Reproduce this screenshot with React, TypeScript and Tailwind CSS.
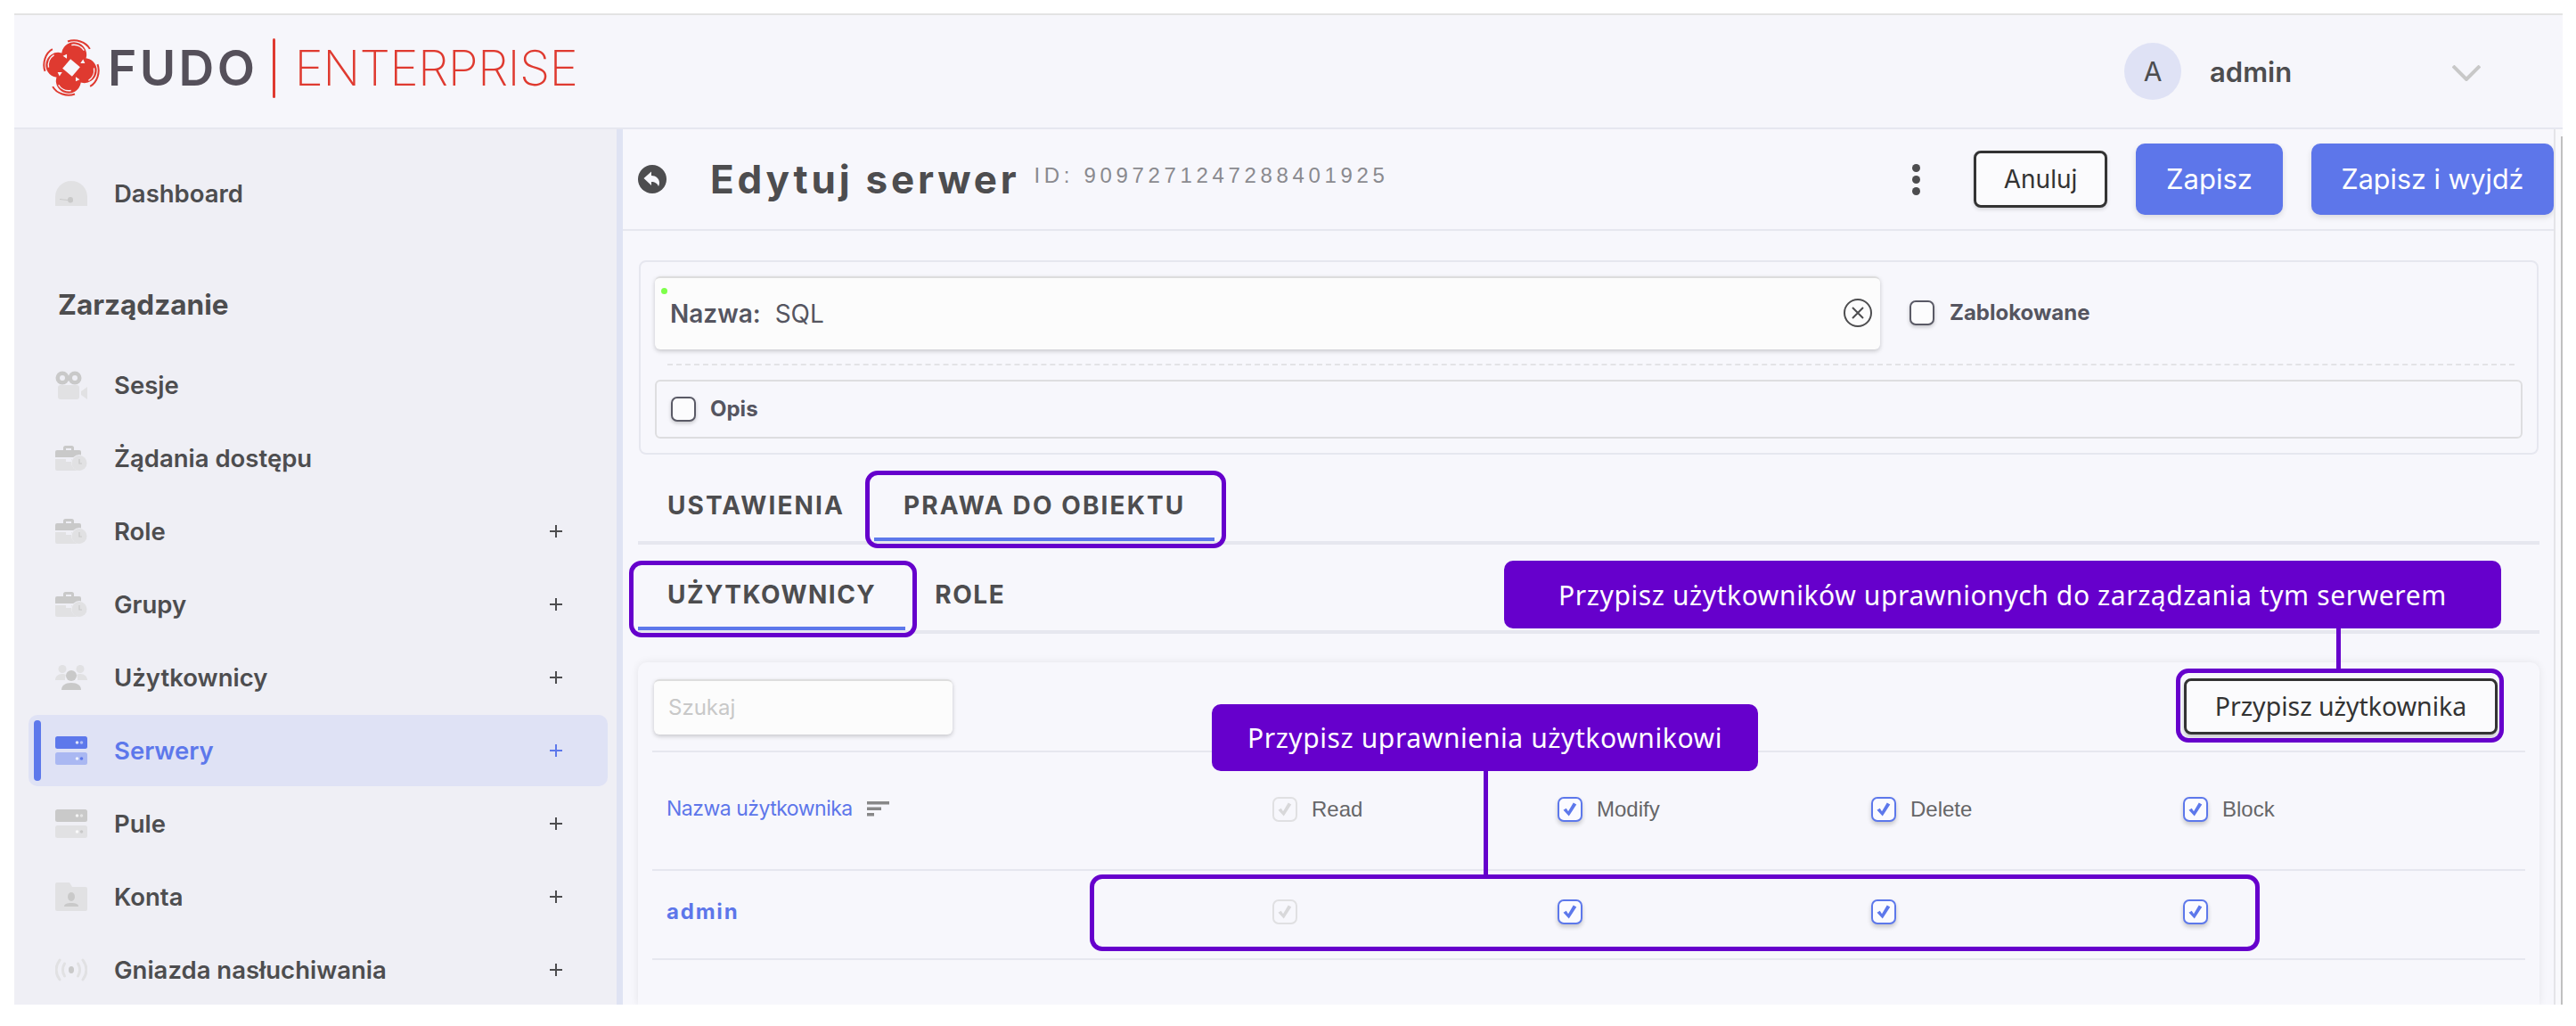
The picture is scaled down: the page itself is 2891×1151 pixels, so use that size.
import React from "react";

const G1 = "#c9c9c9";
const G2 = "#e1e1e3";

function DashIcon() {
  return (
    <svg width="36" height="28" viewBox="0 0 36 28">
      <path d="M0 28V18a18 18 0 0 1 36 0v10z" fill={G2} />
      <path d="M5 20l9 1a3 3 0 0 1 6 0 3 3 0 0 1-6 1l-9-1z" fill={G1} />
    </svg>
  );
}
function CamIcon() {
  return (
    <svg width="36" height="32" viewBox="0 0 36 32">
      <circle cx="8" cy="8" r="7.5" fill={G1} />
      <circle cx="22" cy="8" r="7.5" fill={G1} />
      <circle cx="8" cy="8" r="3" fill="#efeff5" />
      <circle cx="22" cy="8" r="3" fill="#efeff5" />
      <rect x="3" y="16" width="24" height="16" rx="3" fill={G2} />
      <path d="M29 23l7-5v14l-7-5z" fill={G2} />
    </svg>
  );
}
function CaseIcon() {
  return (
    <svg width="36" height="28" viewBox="0 0 36 28">
      <path d="M9 6V2.500A2.500 2.500 0 0 1 11.500 0h7A2.500 2.500 0 0 1 21 2.500V6h-3V3h-6v3z" fill={G1} />
      <path d="M2 5h25a2 2 0 0 1 2 2v6H0V7a2 2 0 0 1 2-2z" fill={G1} />
      <path d="M0 15h12v3h6v-3h11v11a2 2 0 0 1-2 2H2a2 2 0 0 1-2-2z" fill={G2} />
      <circle cx="27" cy="19" r="9" fill="#efeff5" />
      <circle cx="27" cy="19.500" r="8.500" fill={G2} />
      <path d="M27 15v5h3" stroke={G1} strokeWidth="1.200" fill="none" />
    </svg>
  );
}
function UsersIcon() {
  return (
    <svg width="36" height="28" viewBox="0 0 36 28">
      <circle cx="8" cy="4.500" r="4.500" fill={G2} />
      <circle cx="28" cy="4.500" r="4.500" fill={G2} />
      <path d="M0 17c0-4 3-7 8-7 2 0 3 .5 4 1-1 2-1 4-1 6z" fill={G2} />
      <path d="M36 17c0-4-3-7-8-7-2 0-3 .5-4 1 1 2 1 4 1 6z" fill={G2} />
      <circle cx="18" cy="12" r="6" fill={G1} />
      <path d="M7 28c0-5 4-8 11-8s11 3 11 8z" fill={G1} />
    </svg>
  );
}
function ServerIcon({ a, b }: { a: string; b: string }) {
  return (
    <svg width="36" height="32" viewBox="0 0 36 32">
      <rect width="36" height="14" rx="2.500" fill={a} />
      <rect y="18" width="36" height="14" rx="2.500" fill={b} />
      <circle cx="24.500" cy="7" r="1.800" fill="#fff" fillOpacity="0.800" />
      <circle cx="29.500" cy="7" r="1.800" fill="#fff" fillOpacity="0.500" />
      <circle cx="24.500" cy="25" r="1.800" fill="#fff" fillOpacity="0.800" />
      <circle cx="29.500" cy="25" r="1.800" fill={a} />
    </svg>
  );
}
function FolderIcon() {
  return (
    <svg width="36" height="32" viewBox="0 0 36 32">
      <path d="M2 0h14l3 5h15a2 2 0 0 1 2 2v23a2 2 0 0 1-2 2H2a2 2 0 0 1-2-2V2a2 2 0 0 1 2-2z" fill={G2} />
      <ellipse cx="18" cy="16" rx="4" ry="5" fill={G1} />
      <path d="M10 27c0-3 3-4 8-4s8 1 8 4z" fill={G1} />
    </svg>
  );
}
function RadioIcon() {
  return (
    <svg width="36" height="26" viewBox="0 0 36 26" fill="none" stroke={G2} strokeWidth="3" strokeLinecap="round">
      <path d="M5 2C0 9 0 17 5 24" />
      <path d="M31 2c5 7 5 15 0 22" />
      <path d="M10.500 6c-3 5-3 9 0 14" />
      <path d="M25.500 6c3 5 3 9 0 14" />
      <ellipse cx="18" cy="13" rx="3" ry="4" fill={G1} stroke="none" />
    </svg>
  );
}

const nav = [
  { label: "Sesje", icon: <CamIcon /> },
  { label: "Żądania dostępu", icon: <CaseIcon /> },
  { label: "Role", icon: <CaseIcon />, plus: true },
  { label: "Grupy", icon: <CaseIcon />, plus: true },
  { label: "Użytkownicy", icon: <UsersIcon />, plus: true },
  { label: "Serwery", icon: <ServerIcon a="#5d78eb" b="#aab8f2" />, plus: true, active: true },
  { label: "Pule", icon: <ServerIcon a={G1} b={G2} />, plus: true },
  { label: "Konta", icon: <FolderIcon />, plus: true },
  { label: "Gniazda nasłuchiwania", icon: <RadioIcon />, plus: true },
];

function NavRow({ label, icon, plus, active }: { label: string; icon: React.ReactNode; plus?: boolean; active?: boolean }) {
  return (
    <div className="h-[82px] py-px ml-4 mr-[10px]">
      <div className={`relative h-[80px] flex items-center pl-[30px] pr-[51px] rounded-[10px] ${active ? "bg-[#dfe2f5] text-[#5d78eb]" : "text-[#4d4d4f]"}`}>
        {active && <div className="absolute left-[6px] top-[6px] bottom-[6px] w-2 rounded-full bg-[#5d78eb]" />}
        <div className="w-9 flex justify-center shrink-0">{icon}</div>
        <span className="ml-[30px] pt-px text-[27.500px] leading-none font-semibold">{label}</span>
        {plus && (
          <svg className="ml-auto" width="14" height="14" viewBox="0 0 14 14" stroke="currentColor" strokeWidth="2">
            <path d="M7 0v14M0 7h14" />
          </svg>
        )}
      </div>
    </div>
  );
}

function Logo() {
  const lobe = [12, 102, 192, 282];
  return (
    <div className="flex items-center -mt-2 ml-8">
      <svg width="64" height="64" viewBox="0 0 64 64">
        {lobe.map((a) => (
          <g key={a} transform={`rotate(${a} 32 32)`}>
            <path d="M22 4C30-1 42 0 48 7" fill="none" stroke="#df3a30" strokeWidth="2" />
            <circle cx="32" cy="17" r="14" fill="#df3a30" />
          </g>
        ))}
        {lobe.map((a) => (
          <g key={`w${a}`} transform={`rotate(${a} 32 32)`}>
            <path d="M27 7c5-2 11-1 15 3" fill="none" stroke="#f6f6fb" strokeWidth="1.400" />
            <path d="M43 20l3 4-5 1z" fill="#f6f6fb" />
          </g>
        ))}
        <rect x="25" y="25" width="14" height="14" fill="#f6f6fb" transform="rotate(40 32 32)" />
      </svg>
      <span className="ml-[9px] text-[55px] leading-none font-semibold tracking-[3.400px] text-[#55505a]">FUDO</span>
      <div className="ml-[17px] w-[3px] h-[67px] rounded-full bg-[#df3a30]" />
      <span className="ml-[21px] text-[55px] leading-none font-extralight tracking-[-0.700px] text-[#df3a30]">ENTERPRISE</span>
    </div>
  );
}

function Checkbox({ state }: { state: "empty" | "on" | "disabled" }) {
  const cls =
    state === "empty"
      ? "border-[#5a5a66] bg-[#fcfcfd] shadow-[0_2px_4px_rgba(0,0,0,0.2)]"
      : state === "on"
        ? "border-[#5d78eb] bg-[#fbfbff] shadow-[0_3px_5px_rgba(0,0,0,0.2)]"
        : "border-[#e0e0e2] bg-[#f7f7fc]";
  return (
    <div className={`w-[28px] h-[28px] shrink-0 rounded-[7px] border-2 flex items-center justify-center ${cls}`}>
      {state !== "empty" && (
        <svg width="20" height="20" viewBox="0 0 16 16" fill={state === "on" ? "#5d78eb" : "#d8d8da"}>
          <path d="M2 8.500l2.600-1.500 1.800 2.800L11 2l2.800 1.500L7 14z" />
        </svg>
      )}
    </div>
  );
}

function Tab({ children, active, box, sub }: { children: React.ReactNode; active?: boolean; box?: boolean; sub?: boolean }) {
  return (
    <div className={`relative flex items-center px-[33px] border-b-4 text-[28px] leading-none font-bold ${sub ? "tracking-[1.500px]" : "tracking-[2.100px]"} text-[#4d4d4f] ${active ? "border-[#5d78eb]" : "border-transparent"}`}>
      {children}
      {box && <div className="absolute -left-[10px] -right-[13px] -top-[2px] -bottom-[12px] border-[5px] border-[#6600cc] rounded-[14px]" />}
    </div>
  );
}

function PermCell({ state, label }: { state: "on" | "disabled"; label?: string }) {
  return (
    <div className="flex items-center gap-[16px]">
      <Checkbox state={state} />
      {label && <span className="[font-family:'Liberation_Sans',sans-serif] text-[24px] leading-none text-[#666668]">{label}</span>}
    </div>
  );
}

export default function App() {
  return (
    <div className="w-[2891px] h-[1151px] bg-white pt-[15px] pb-6 pl-4 pr-[15px] [font-family:Inter,sans-serif] overflow-hidden">
      <div className="h-full flex flex-col">
        <header className="h-[130px] shrink-0 border-t-2 border-t-[#e3e3e3] border-b-2 border-b-[#e6e7ef] bg-[#f6f6fb] flex items-center">
          <Logo />
          <div className="ml-auto mr-[92px] flex items-center">
            <div className="w-16 h-16 rounded-full bg-[#dfe2f5] flex items-center justify-center text-[30px] text-[#4d4d4f]">A</div>
            <span className="ml-[32px] w-[272px] text-[31px] pt-[2px] font-semibold text-[#4d4d4f]">admin</span>
            <svg className="mt-[3px]" width="32" height="18" viewBox="0 0 32 18" fill="none" stroke="#c8c8c8" strokeWidth="4">
              <path d="M1 1l15 15L31 1" />
            </svg>
          </div>
        </header>

        <div className="flex-1 flex min-h-0">
          <aside className="w-[676px] shrink-0 bg-[#efeff5] pt-[31px] overflow-hidden">
            <NavRow label="Dashboard" icon={<DashIcon />} />
            <div className="h-[133px] pl-[49px] pt-[64px] text-[31.500px] leading-10 font-bold text-[#4d4d4f]">Zarządzanie</div>
            {nav.map((n) => (
              <NavRow key={n.label} {...n} />
            ))}
          </aside>
          <div className="w-[7px] shrink-0 bg-[#dfe3f3]" />

          <main className="relative w-[2167px] shrink-0 bg-[#f7f7fc] flex flex-col overflow-hidden">
            <div className="h-[114px] shrink-0 border-b-2 border-[#e6e7ef] flex items-center pl-[17px]">
              <svg width="32" height="32" viewBox="0 0 32 32">
                <circle cx="16" cy="16" r="16" fill="#4d4d4f" />
                <path d="M6.500 15L15 7.500v4.500c5 0 9 3.500 9 8 0 1.500-.5 3-1 4-1-3-4-5-8-5v4z" fill="#f7f7fc" />
              </svg>
              <h1 className="ml-[49px] text-[44px] leading-none font-bold tracking-[3.800px] text-[#4d4d4f]">Edytuj serwer</h1>
              <span className="ml-[16px] -mt-[8px] [font-family:'Liberation_Sans',sans-serif] text-[24px] leading-none tracking-[4.650px] text-[#8a8a8f]">ID: 9097271247288401925</span>
              <div className="ml-auto flex items-center">
                <div className="flex flex-col gap-[4px] mr-[60px]">
                  <div className="w-[9px] h-[9px] rounded-full bg-[#4d4d4f]" />
                  <div className="w-[9px] h-[9px] rounded-full bg-[#4d4d4f]" />
                  <div className="w-[9px] h-[9px] rounded-full bg-[#4d4d4f]" />
                </div>
                <div className="w-[150px] h-16 rounded-[8px] border-[3px] border-[#333] bg-[#fbfbfd] flex items-center justify-center text-[28px] text-[#333] shadow-[0_2px_4px_rgba(0,0,0,0.15)]">Anuluj</div>
                <div className="ml-[32px] w-[165px] h-20 rounded-[10px] bg-[#5d76ea] flex items-center justify-center text-[31px] text-white shadow-[0_3px_6px_rgba(0,0,0,0.12)]">Zapisz</div>
                <div className="ml-[32px] w-[272px] h-20 rounded-[10px] bg-[#5d76ea] flex items-center justify-center text-[30.500px] text-white shadow-[0_3px_6px_rgba(0,0,0,0.12)]">Zapisz i wyjdź</div>
              </div>
            </div>

            <div className="mt-[33px] ml-[18px] mr-[17px] h-[218px] shrink-0 border-2 border-[#e6e7ef] rounded-[8px] pt-[16px] pl-[16px] pr-[16px]">
              <div className="flex items-center">
                <div className="relative w-[1375px] h-[82px] bg-[#fcfcfc] border-t-2 border-t-[#dddddd] rounded-[6px] shadow-[0_2px_5px_rgba(0,0,0,0.2)] flex items-center pl-[17px] text-[28px] leading-none">
                  <div className="absolute left-[7px] top-[11px] w-[7px] h-[7px] rounded-full bg-[#7dff4a]" />
                  <span className="font-semibold text-[#555560]">Nazwa:</span>
                  <span className="ml-[16px] text-[#555560]">SQL</span>
                  <svg className="absolute right-[9px] top-[23px]" width="32" height="32" viewBox="0 0 32 32" fill="none" stroke="#4d4d4f" strokeWidth="2">
                    <circle cx="16" cy="16" r="15" />
                    <path d="M10 10l12 12M22 10L10 22" />
                  </svg>
                </div>
                <div className="ml-[33px]"><Checkbox state="empty" /></div>
                <span className="ml-[17px] text-[24px] font-bold text-[#555560]">Zablokowane</span>
              </div>
              <div className="mt-[16px] ml-[14px] mr-[9px] border-t-2 border-dashed border-[#e3e3e6]" />
              <div className="mt-[16px] w-[2096px] h-[66px] border-2 border-[#dedee0] rounded-[6px] flex items-center pl-[16px]">
                <Checkbox state="empty" />
                <span className="ml-[16px] text-[24px] font-bold text-[#555560]">Opis</span>
              </div>
            </div>

            <div className="ml-[17px] mr-[16px] mt-0 h-[101px] shrink-0 border-b-4 border-[#e6e7ef] pt-[20px] flex">
              <Tab>USTAWIENIA</Tab>
              <Tab active box>PRAWA DO OBIEKTU</Tab>
            </div>
            <div className="ml-[17px] mr-[16px] h-[100px] shrink-0 border-b-4 border-[#e6e7ef] pt-[20px] flex">
              <Tab active box sub>UŻYTKOWNICY</Tab>
              <Tab sub>ROLE</Tab>
            </div>

            <div className="relative mt-[32px] ml-[17px] mr-[16px] flex-1 min-h-0 rounded-t-[10px] bg-[#f7f7fc] shadow-[0_0_10px_rgba(0,0,0,0.08)] px-4">
              <div className="h-[101px] border-b-2 border-[#e6e7ef] flex items-start justify-between pt-[19px] pr-[31px]">
                <div className="ml-[2px] w-[335px] h-[62px] bg-[#fcfcfc] border-t-2 border-t-[#dddddd] rounded-[6px] shadow-[0_2px_5px_rgba(0,0,0,0.2)] flex items-center pl-[16px] text-[24px] text-[#c8c8c8]">Szukaj</div>
                <div className="relative -mt-px w-[352px] h-[63px] rounded-[8px] border-[3px] border-[#333] bg-[#fbfbfd] shadow-[0_3px_4px_rgba(0,0,0,0.2)] flex items-center justify-center [font-family:'Noto_Sans',sans-serif] text-[28.500px] text-[#333]">
                  Przypisz użytkownika
                  <div className="absolute -left-[12px] -right-[10px] -top-[14px] -bottom-[12px] border-[5px] border-[#6600cc] rounded-[14px]" />
                </div>
              </div>
              <div className="h-[133px] pb-[4px] border-b-2 border-[#e6e7ef] grid grid-cols-[680px_320px_352px_350px_1fr] items-center pl-4">
                <div className="flex items-center gap-[16px]">
                  <span className="text-[23px] leading-none tracking-[-0.500px] text-[#5d76ea]">Nazwa użytkownika</span>
                  <svg width="25" height="17" viewBox="0 0 25 17" fill="#888">
                    <rect width="25" height="3.500" />
                    <rect y="6.500" width="16" height="3.500" />
                    <rect y="13" width="8" height="3.500" />
                  </svg>
                </div>
                <PermCell state="disabled" label="Read" />
                <PermCell state="on" label="Modify" />
                <PermCell state="on" label="Delete" />
                <PermCell state="on" label="Block" />
              </div>
              <div className="relative h-[100px] pb-[6px] border-b-2 border-[#e6e7ef] grid grid-cols-[680px_320px_352px_350px_1fr] items-center pl-4">
                <span className="text-[24px] leading-none font-bold tracking-[1.800px] text-[#5d76ea]">admin</span>
                <PermCell state="disabled" />
                <PermCell state="on" />
                <PermCell state="on" />
                <PermCell state="on" />
                <div className="absolute left-[491px] w-[1313px] top-[4px] h-[86px] border-[5px] border-[#6600cc] rounded-[14px]" />
              </div>
            </div>

            <div className="absolute left-[989px] top-[484px] w-[1119px] h-[76px] rounded-[10px] bg-[#6600cc] flex items-center justify-center [font-family:'Noto_Sans',sans-serif] text-[30px] tracking-[0.600px] text-white">
              Przypisz użytkowników uprawnionych do zarządzania tym serwerem
              <div className="absolute left-[934px] top-[76px] w-[5px] h-[45px] bg-[#6600cc]" />
            </div>
            <div className="absolute left-[661px] top-[645px] w-[613px] h-[75px] rounded-[10px] bg-[#6600cc] flex items-center justify-center [font-family:'Noto_Sans',sans-serif] text-[30px] tracking-[0.600px] text-white">
              Przypisz uprawnienia użytkownikowi
              <div className="absolute left-[305px] top-[75px] w-[5px] h-[116px] bg-[#6600cc]" />
            </div>
          </main>

          <div className="w-[10px] shrink-0 border-l-2 border-[#e4e4e8] bg-[#f9f9fc] flex justify-end pt-[8px]">
            <div className="w-[2px] bg-[#c0c0c0]" />
          </div>
        </div>
      </div>
    </div>
  );
}
